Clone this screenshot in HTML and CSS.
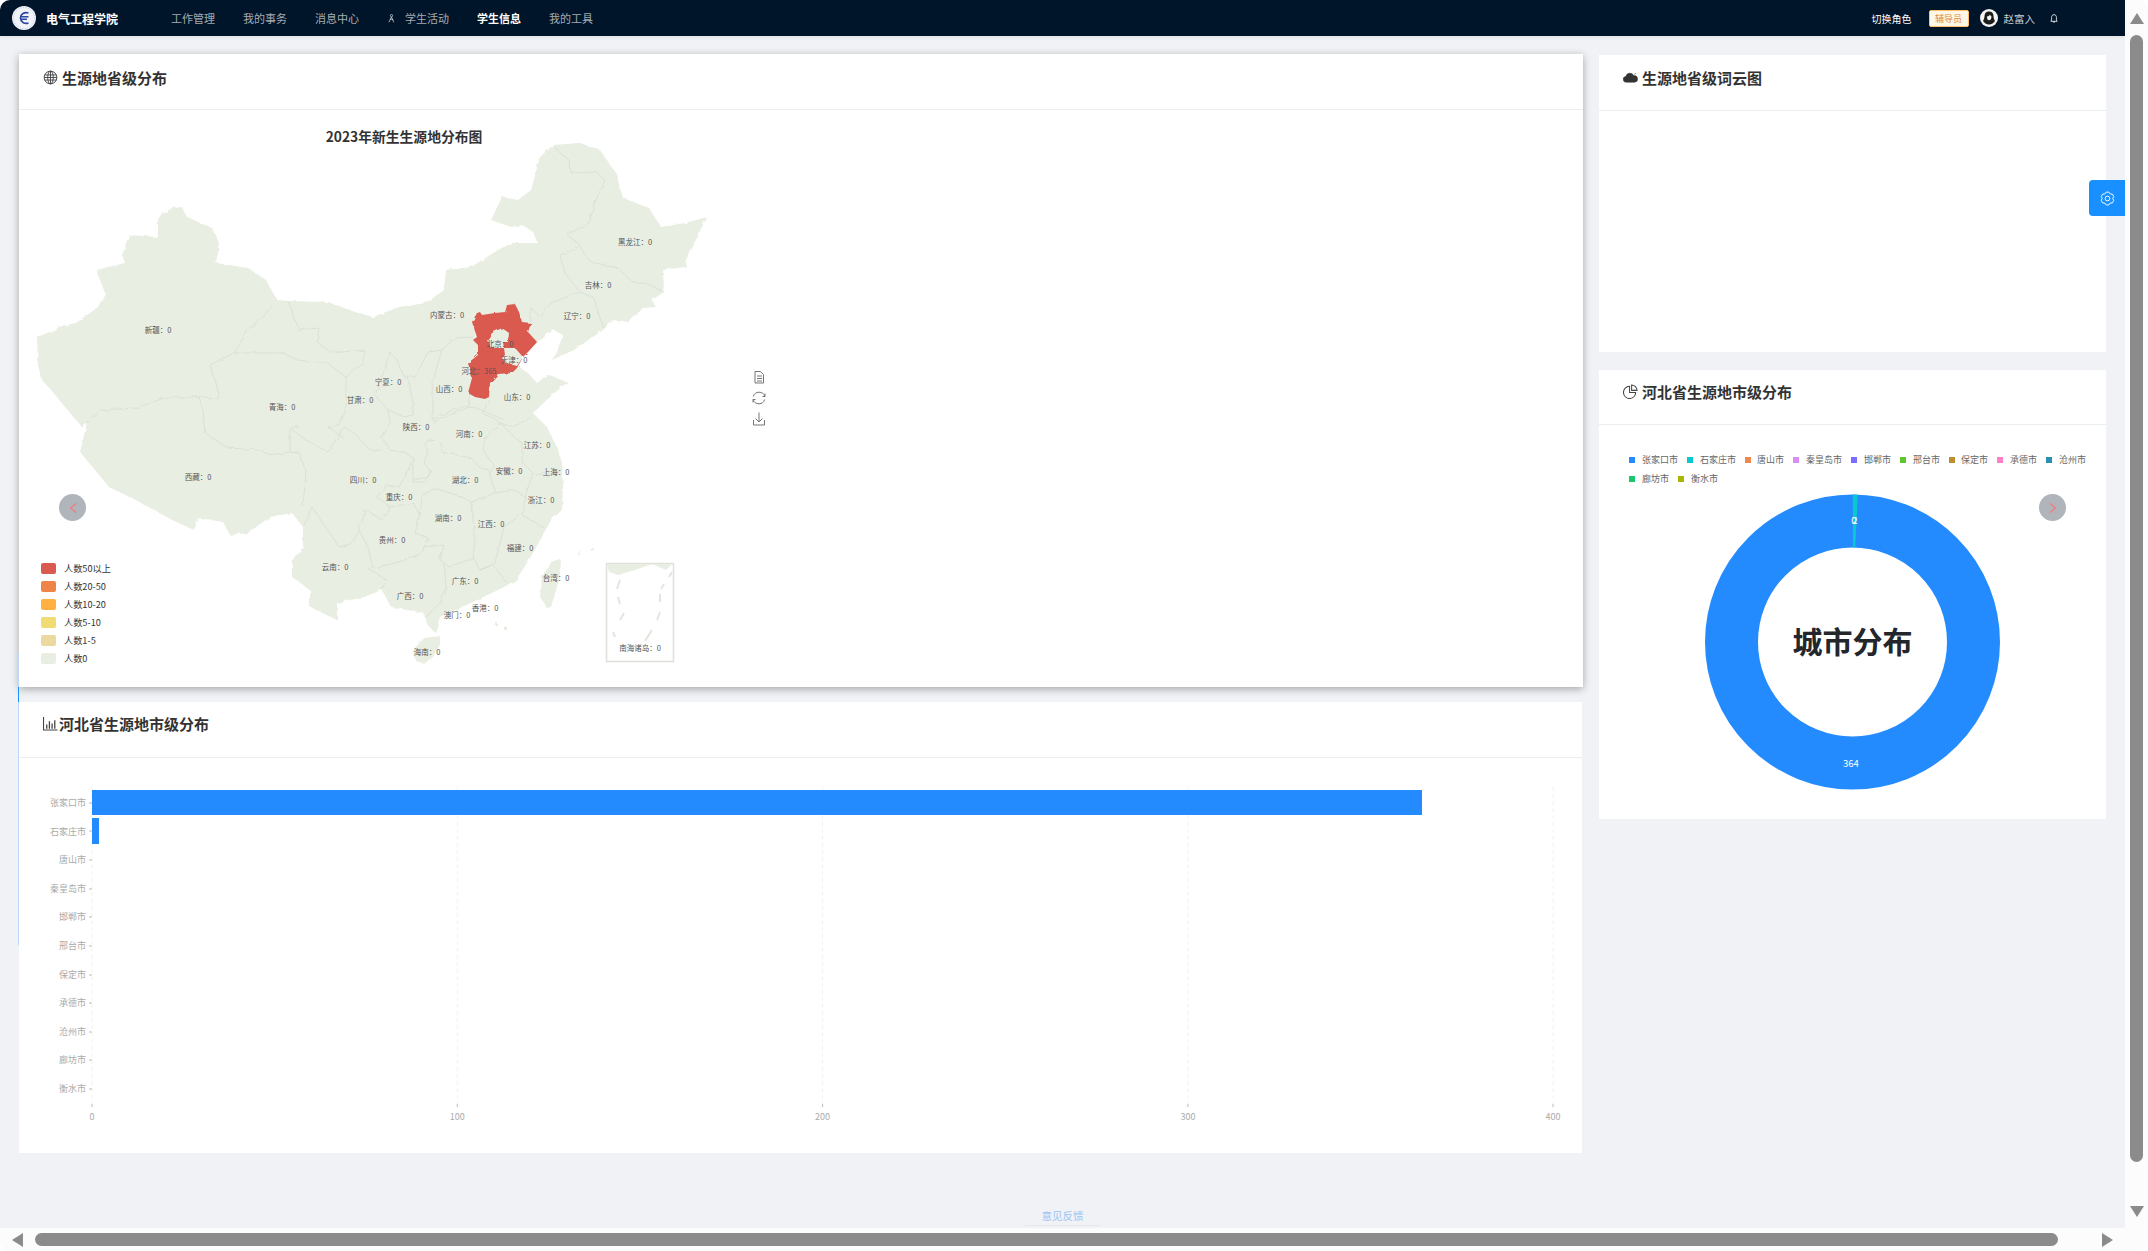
FILE: index.html
```html
<!DOCTYPE html>
<html lang="zh-CN">
<head>
  <meta charset="UTF-8" />
  <meta name="viewport" content="width=device-width, initial-scale=1" />
  <title>生源地分布 - 电气工程学院</title>
  <link rel="stylesheet" href="styles.css">
</head>
<body>
<div class="window">
  <div class="page">
    <header class="nav">
      <div class="brand">
        <svg class="logo" viewBox="0 0 24 24">
          <circle cx="12" cy="12" r="12" fill="#f1f3f8"/>
          <circle cx="12" cy="12" r="10.5" fill="none" stroke="#c3cce0" stroke-dasharray="1.2 1.2"/>
          <path d="M16.5 7C12.5 5.5 8.5 8.3 8.5 12s4 6.5 8 5" fill="none" stroke="#2b4a9e" stroke-width="1.7"/>
          <path d="M9 10.7h7.5M9 13.3h6" stroke="#2b4a9e" stroke-width="1.4"/>
        </svg>
        <span class="brand-name">电气工程学院</span>
      </div>
      <nav class="menu">
        <a>工作管理</a>
        <a>我的事务</a>
        <a>消息中心</a>
        <a class="with-icon">
          <svg viewBox="0 0 12 12" class="menu-icon"><circle cx="6" cy="2.2" r="1.5" fill="none" stroke="currentColor"/><path d="M6 4L2.5 11M6 4l3 7M3.8 6.5l4.5 1" fill="none" stroke="currentColor"/></svg>
          学生活动</a>
        <a class="active">学生信息</a>
        <a>我的工具</a>
      </nav>
      <div class="nav-right">
        <span class="switch-role">切换角色</span>
        <span class="role-tag">辅导员</span>
        <svg class="avatar" viewBox="0 0 18 18">
          <circle cx="9" cy="9" r="9" fill="#f4f4f4"/>
          <path d="M9 2.5c-3 0-4.5 2-4.5 4.5 0 2.5-1 4-1.5 5 1 1.8 3.5 3.5 6 3.5s5-1.7 6-3.5c-.5-1-1.5-2.5-1.5-5C13.500 4.500 12 2.500 9 2.500z" fill="#1c1c1c"/>
          <path d="M7 7.500c1.200 0 2.500-1 3-2 .3 1 1 1.800 1.500 2 0 2-1 3.800-2.500 3.800S7 9.500 7 7.500z" fill="#f4f4f4"/>
        </svg>
        <span class="user-name">赵富入</span>
        <svg class="bell" viewBox="0 0 10 12"><path d="M5 1.200c-2 0-3 1.500-3 3.300V8L1 9.500h8L8 8V4.500C8 2.700 7 1.200 5 1.200zM3.800 10.500h2.400" fill="none" stroke="#fff"/></svg>
      </div>
    </header>

    <main class="content">
      <div class="col-left">
        <section class="card map-card">
          <h2 class="card-title">
            <svg class="title-icon" viewBox="0 0 16 16"><g fill="none" stroke="#444"><circle cx="8" cy="8" r="6.8"/><ellipse cx="8" cy="8" rx="3" ry="6.8"/><path d="M8 1.2v13.6M1.8 5.3h12.4M1.8 10.7h12.4M1.2 8h13.6"/></g></svg>
            生源地省级分布
          </h2>
          <div class="card-body">
            <!-- viewBox uses page coordinates so the map can be traced directly -->
            <svg class="chart" viewBox="19 110 1564 577">
              <defs>
                <filter id="rough" x="0" y="0" width="100%" height="100%">
                  <feTurbulence type="fractalNoise" baseFrequency="0.14" numOctaves="2" seed="4"/>
                  <feDisplacementMap in="SourceGraphic" scale="3.5"/>
                </filter>
              </defs>
              <text class="map-title" x="404" y="142">2023年新生生源地分布图</text>

              <g filter="url(#rough)">
                <path class="land" d="M37 337L47 333 62 326 76 323 98 307 105 293 96 270 125 263 122 255 129 235 158 237 158 217 172 208 182 207 187 217 212 228 219 243 216 263 248 268 266 280 277 300 288 301 328 302 355 312 373 317 399 307 426 303 444 290 446 270 471 267 498 250 511 243 538 243 533 232 522 225 511 227 491 220 502 197 518 200 531 190 540 157 553 145 580 143 600 150 616 173 623 198 649 208 661 227 685 223 707 217 699 233 690 253 685 267 663 270 664 292 652 300 656 307 643 308 629 322 614 320 603 330 574 350 552 360 557 352 563 335 553 330 538 342 523 357 517 365 528 373 537 383 547 375 568 382 552 395 533 413 547 427 560 453 562 470 563 487 562 510 551 520 542 537 529 560 516 580 504 587 471 603 440 617 435 633 426 623 424 613 391 607 382 590 364 597 337 603 337 620 310 607 310 590 292 577 292 563 303 547 303 527 292 513 270 517 248 533 230 535 223 522 199 518 194 530 172 520 136 500 109 487 80 452 87 423 82 427 65 407 51 390 42 380 38 365Z"/>
                <path class="land" d="M551 563L561 560 560 577 551 607 547 608 540 597 542 577Z"/>
                <path class="land" d="M424 638L440 636 440 645 433 657 424 664 415 660 413 650Z"/>
                <path class="land" d="M578 553l3-1 0 2-3 1zM591 549l3-1 0 2-3 1zM495 622l2 0 0 3-2 0zM504 627l3 0 0 3-3 0z"/>

                <g class="borders">
                  <path d="M277 300L274 303 263 317 250 327 234 353 210 365 216 383 219 398 203 397 167 397 136 408 100 410 82 427"/>
                  <path d="M288 301L299 330 319 328 317 342 332 353 364 350 364 363 346 377 346 410 339 425 328 427 344 438"/>
                  <path d="M234 353L283 353 297 360 328 363 346 377"/>
                  <path d="M382 377L390 352 397 360 404 377 415 377 428 352 442 350 455 338 473 337"/>
                  <path d="M382 377L375 395 388 410 404 417 413 415 413 402 407 375"/>
                  <path d="M442 350L433 380 433 407 433 420 448 412 468 405 470 393"/>
                  <path d="M553 145L560 153 569 160 571 173 596 172 605 180 596 200 589 223 567 235 578 243 583 252 591 262 618 268 634 283 645 283 664 292"/>
                  <path d="M578 248L560 255 565 273 580 292 594 298 603 328"/>
                  <path d="M580 292L551 303 540 317 531 308 531 323"/>
                  <path d="M490 400L482 413 497 420 500 425 517 425 532 417"/>
                  <path d="M435 440L424 442 428 450 424 463 431 472 424 482 413 482 413 458 406 453 390 450 382 438 390 423 388 410"/>
                  <path d="M433 422L469 407 482 410 504 420"/>
                  <path d="M500 423L485 437 483 450 495 467 490 473"/>
                  <path d="M440 442L442 452 471 458 480 468 489 470 495 493"/>
                  <path d="M500 422L512 435 522 443 522 462 535 475 560 472"/>
                  <path d="M495 493L515 490 525 497 533 473"/>
                  <path d="M525 497L522 515 544 528"/>
                  <path d="M520 515L504 527 495 563 480 570"/>
                  <path d="M495 493L471 502 462 497 435 488 422 497 420 515 415 533 428 538 424 547"/>
                  <path d="M471 502L475 537 473 558 449 567 440 560 444 545 424 547"/>
                  <path d="M473 558L480 570 493 565 507 583"/>
                  <path d="M377 497L390 507 413 503 420 515"/>
                  <path d="M377 497L386 485 399 487 408 470 413 458"/>
                  <path d="M413 480L428 477 431 470"/>
                  <path d="M390 507L382 520 366 510 359 530 368 547 373 568 399 562 422 553 424 547"/>
                  <path d="M303 527L312 507 339 547 353 543 359 530"/>
                  <path d="M303 507L306 470 299 453 290 452 290 428 299 427"/>
                  <path d="M290 452L268 455 261 450 228 448 205 433 203 410 199 397"/>
                  <path d="M290 428L306 440 328 452 344 427 353 432 370 450 382 450"/>
                  <path d="M368 568L386 580 382 590"/>
                  <path d="M444 563L446 587 440 603 426 617"/>
                </g>

                <path class="hebei" d="M480 312L482 315 495 313 505 312 507 305 515 304 519 312 522 322 531 323 528 332 537 342 528 352 523 357 517 368 512 373 498 374 490 383 489 397 485 399 475 397 468 393 472 378 468 363 478 355 478 345 473 340 477 337 472 322 477 313Z"/>
                <path class="land" d="M502 328L509 333 508 342 503 342 504 348 491 348 487 340 492 333Z"/>
                <path class="land" d="M504 348L515 348 523 357 517 366 505 363 502 358 505 355Z"/>
              </g>

              <g class="province-labels">
                <text x="635" y="245">黑龙江：0</text>
                <text x="598" y="288">吉林：0</text>
                <text x="577" y="319">辽宁：0</text>
                <text x="447" y="318">内蒙古：0</text>
                <text x="158" y="333">新疆：0</text>
                <text x="500" y="347">北京：0</text>
                <text x="514" y="363">天津：0</text>
                <text x="479" y="374">河北：365</text>
                <text x="449" y="392">山西：0</text>
                <text x="517" y="400">山东：0</text>
                <text x="388" y="385">宁夏：0</text>
                <text x="282" y="410">青海：0</text>
                <text x="360" y="403">甘肃：0</text>
                <text x="416" y="430">陕西：0</text>
                <text x="469" y="437">河南：0</text>
                <text x="537" y="448">江苏：0</text>
                <text x="509" y="474">安徽：0</text>
                <text x="556" y="475">上海：0</text>
                <text x="198" y="480">西藏：0</text>
                <text x="363" y="483">四川：0</text>
                <text x="465" y="483">湖北：0</text>
                <text x="399" y="500">重庆：0</text>
                <text x="541" y="503">浙江：0</text>
                <text x="448" y="521">湖南：0</text>
                <text x="491" y="527">江西：0</text>
                <text x="392" y="543">贵州：0</text>
                <text x="520" y="551">福建：0</text>
                <text x="335" y="570">云南：0</text>
                <text x="556" y="581">台湾：0</text>
                <text x="465" y="584">广东：0</text>
                <text x="410" y="599">广西：0</text>
                <text x="485" y="611">香港：0</text>
                <text x="457" y="618">澳门：0</text>
                <text x="427" y="655">海南：0</text>
              </g>

              <!-- south china sea inset -->
              <rect class="inset" x="606.5" y="563.5" width="67" height="98"/>
              <path class="land" d="M607 564L609 572 618 575 635 570 652 564 666 570 672 564Z"/>
              <path class="dash-line" d="M620 580l-3 9M618 597l2 7M624 613l-4 7M613 632l2 5M652 630l-7 11M660 612l-3 8M660 594l0 8M664 584l-3 5M672 572l-3 5"/>
              <text class="province-label-solo" x="640" y="651">南海诸岛：0</text>

              <g class="legend">
                <rect x="41" y="563" width="15" height="11" rx="2" fill="#db5a4f"/>
                <rect x="41" y="581" width="15" height="11" rx="2" fill="#ee8445"/>
                <rect x="41" y="599" width="15" height="11" rx="2" fill="#ffb041"/>
                <rect x="41" y="617" width="15" height="11" rx="2" fill="#f1dc74"/>
                <rect x="41" y="635" width="15" height="11" rx="2" fill="#ebd9a0"/>
                <rect x="41" y="653" width="15" height="11" rx="2" fill="#e9eee3"/>
                <text x="64" y="572">人数50以上</text>
                <text x="64" y="590">人数20-50</text>
                <text x="64" y="608">人数10-20</text>
                <text x="64" y="626">人数5-10</text>
                <text x="64" y="644">人数1-5</text>
                <text x="64" y="662">人数0</text>
              </g>

              <g class="toolbox">
                <path d="M755 371.5h5.5l3 3v8.500h-8.500zM757 376h5M757 378.5h5M757 381h5"/>
                <path d="M764.8 396.5A6 6 0 0 0 753.3 396.5M753.2 399.5A6 6 0 0 0 764.7 399.5M765 393.5v3h-2.5M753 402.5v-3h2.5"/>
                <path d="M759 412.5v9M755.5 418.5l3.5 3.5 3.5-3.5M753.5 420v5h11v-5"/>
              </g>
            </svg>
          </div>
        </section>

        <section class="card bar-card">
          <h2 class="card-title title-tight">
            <svg class="title-icon" viewBox="0 0 14 14"><path d="M.5 1v12h13" fill="none" stroke="#444"/><path d="M3.500 12V8M6 12V5M8.500 12V7M11 12V4" stroke="#444" stroke-width="1.2"/></svg>河北省生源地市级分布
          </h2>
          <div class="card-body">
            <svg class="chart" viewBox="19 758 1563 395">
              <g class="grid-lines">
                <path d="M92 787V1104M457.3 787V1104M822.6 787V1104M1187.9 787V1104M1553 787V1104"/>
              </g>
              <path class="axis-ticks" d="M92 1104v3M457.3 1104v3M822.6 1104v3M1187.9 1104v3M1553 1104v3M89 803h3M89 831h3M89 860h3M89 889h3M89 917h3M89 946h3M89 975h3M89 1003h3M89 1032h3M89 1060h3M89 1089h3"/>
              <rect x="92" y="790" width="1330" height="25" fill="#248bff"/>
              <rect x="92" y="818" width="7" height="26" fill="#248bff"/>
              <g class="cat-labels">
                <text x="86" y="806">张家口市</text>
                <text x="86" y="835">石家庄市</text>
                <text x="86" y="863">唐山市</text>
                <text x="86" y="892">秦皇岛市</text>
                <text x="86" y="920">邯郸市</text>
                <text x="86" y="949">邢台市</text>
                <text x="86" y="978">保定市</text>
                <text x="86" y="1006">承德市</text>
                <text x="86" y="1035">沧州市</text>
                <text x="86" y="1063">廊坊市</text>
                <text x="86" y="1092">衡水市</text>
              </g>
              <g class="val-labels">
                <text x="92" y="1120">0</text>
                <text x="457.3" y="1120">100</text>
                <text x="822.6" y="1120">200</text>
                <text x="1187.9" y="1120">300</text>
                <text x="1553" y="1120">400</text>
              </g>
            </svg>
          </div>
        </section>
      </div>

      <div class="col-right">
        <section class="card cloud-card">
          <h2 class="card-title">
            <svg class="title-icon" viewBox="0 0 16 12"><path d="M3.500 11A3 3 0 0 1 3 5a4.500 4.500 0 0 1 8.500-1A3.500 3.500 0 0 1 12.500 11zM12 2.500l2-1" fill="#333" stroke="#333" stroke-width=".6"/></svg>
            生源地省级词云图
          </h2>
        </section>

        <section class="card pie-card">
          <h2 class="card-title">
            <svg class="title-icon" viewBox="0 0 16 16"><path d="M7 2.500a6.500 6.500 0 1 0 6.500 6.500H7z" fill="none" stroke="#444" stroke-width="1.1"/><path d="M9.200 1v5.800H15A5.800 5.800 0 0 0 9.200 1z" fill="none" stroke="#444" stroke-width="1.1"/></svg>
            河北省生源地市级分布
          </h2>
          <div class="card-body">
            <svg class="chart" viewBox="1599 425 507 394">
              <g class="pie-legend">
                <rect x="1629" y="457" width="6" height="6" fill="#248bff"/><text x="1642" y="463">张家口市</text>
                <rect x="1687" y="457" width="6" height="6" fill="#0ac8ce"/><text x="1700" y="463">石家庄市</text>
                <rect x="1745" y="457" width="6" height="6" fill="#f0874e"/><text x="1757" y="463">唐山市</text>
                <rect x="1793" y="457" width="6" height="6" fill="#da8cf5"/><text x="1806" y="463">秦皇岛市</text>
                <rect x="1851" y="457" width="6" height="6" fill="#7a6cff"/><text x="1864" y="463">邯郸市</text>
                <rect x="1900" y="457" width="6" height="6" fill="#5ec62e"/><text x="1913" y="463">邢台市</text>
                <rect x="1949" y="457" width="6" height="6" fill="#bf8e2c"/><text x="1961" y="463">保定市</text>
                <rect x="1997" y="457" width="6" height="6" fill="#ff80c8"/><text x="2010" y="463">承德市</text>
                <rect x="2046" y="457" width="6" height="6" fill="#2b8fb3"/><text x="2059" y="463">沧州市</text>
                <rect x="1629" y="476" width="6" height="6" fill="#1ac86e"/><text x="1642" y="482">廊坊市</text>
                <rect x="1678" y="476" width="6" height="6" fill="#a8b800"/><text x="1691" y="482">衡水市</text>
              </g>
              <circle cx="1852.5" cy="642" r="121" fill="none" stroke="#248bff" stroke-width="53"/>
              <path d="M1852.8 494.5L1857.8 494.6 1855.3 547.5 1853 547.5Z" fill="#0ac8ce"/>
              <text class="pie-value" x="1854" y="524">0</text>
              <text class="pie-value" x="1855" y="524">2</text>
              <text class="pie-value" x="1851" y="767">364</text>
              <text class="pie-center" x="1852.5" y="653">城市分布</text>
            </svg>
          </div>
        </section>
      </div>
    </main>

    <footer class="feedback"><a>意见反馈</a></footer>
  </div>

  <div class="vscroll">
    <span class="arrow arrow-up"></span>
    <span class="thumb-v"></span>
    <span class="arrow arrow-down"></span>
  </div>
  <div class="hscroll">
    <span class="arrow arrow-left"></span>
    <span class="thumb-h"></span>
    <span class="arrow arrow-right"></span>
  </div>
  <div class="corner"></div>

  <span class="edge-line"></span>
  <button class="settings-btn">
    <svg viewBox="0 0 16 16"><path d="M6.54 1.15H9.46L10.8 3.15 13.2 3.32 14.66 5.84 13.6 8 14.66 10.16 13.2 12.68 10.8 12.85 9.46 14.85H6.54L5.2 12.85 2.8 12.68 1.34 10.16 2.4 8 1.34 5.84 2.8 3.32 5.2 3.15Z" fill="none" stroke="#fff" stroke-width="1" stroke-linejoin="round"/><circle cx="8" cy="8" r="2.5" fill="none" stroke="#fff" stroke-width="1"/></svg>
  </button>
  <span class="carousel-btn carousel-prev"><svg viewBox="0 0 8 10"><path d="M7 .5L1.500 5 7 9.500" fill="none" stroke="#f4797e" stroke-width="1.2"/></svg></span>
  <span class="carousel-btn carousel-next"><svg viewBox="0 0 8 10"><path d="M1 .5L6.500 5 1 9.500" fill="none" stroke="#f4797e" stroke-width="1.2"/></svg></span>
</div>
</body>
</html>
```

FILE: styles.css
```css
* {
  box-sizing: border-box;
}
html, body {
  margin: 0;
  padding: 0;
  background: #fff;
}
body {
  font-family: "Noto Sans CJK SC", "Noto Sans", sans-serif;
  color: #333;
  overflow: hidden;
}
.window {
  position: relative;
  width: 2148px;
  height: 1251px;
  display: grid;
  grid-template-columns: 2125px 23px;
  grid-template-rows: 1228px 23px;
  background: #fcfcfc;
  border-radius: 10px;
  overflow: hidden;
}
.page {
  background: #f0f2f5;
  display: flex;
  flex-direction: column;
  overflow: hidden;
}

/* top bar */
.nav {
  height: 36px;
  flex: none;
  background: #001529;
  display: flex;
  align-items: center;
  padding-left: 12px;
  box-shadow: 0 1px 4px rgba(0, 21, 41, 0.08);
  color: rgba(255, 255, 255, 0.65);
  font-size: 11px;
}
.brand {
  display: flex;
  align-items: center;
  width: 145px;
}
.logo {
  width: 24px;
  height: 24px;
  margin-right: 10px;
}
.brand-name {
  font-size: 12px;
  font-weight: 700;
  color: #fff;
}
.menu {
  display: flex;
  gap: 28px;
  flex: 1;
  padding-left: 14px;
}
.menu a {
  white-space: nowrap;
}
.menu .active {
  color: #fff;
  font-weight: 700;
}
.menu .with-icon {
  display: flex;
  align-items: center;
  gap: 9px;
}
.menu-icon {
  width: 9px;
  height: 11px;
  color: #d6dae0;
}
.nav-right {
  display: flex;
  align-items: center;
  padding-right: 67px;
}
.switch-role {
  color: #fff;
  font-size: 10px;
  margin-right: 17px;
}
.role-tag {
  width: 40px;
  height: 17px;
  line-height: 15px;
  text-align: center;
  font-size: 9px;
  color: #e08a3c;
  background: #fff7e6;
  border: 1px solid #ffc069;
  border-radius: 2px;
  margin-right: 11px;
}
.avatar {
  width: 18px;
  height: 18px;
  margin-right: 6px;
}
.user-name {
  font-size: 10.5px;
  color: #ccd0d5;
  margin-right: 15px;
}
.bell {
  width: 8px;
  height: 11px;
}

/* cards */
.content {
  flex: 1;
  min-height: 0;
  display: grid;
  grid-template-columns: 1564px 507px;
  column-gap: 16px;
  padding: 18px 0 0 19px;
  align-items: start;
}
.col-left {
  display: flex;
  flex-direction: column;
  gap: 15px;
}
.col-right {
  display: flex;
  flex-direction: column;
  gap: 18px;
  padding-top: 1px;
}
.card {
  background: #fff;
}
.card-title {
  height: 56px;
  margin: 0;
  padding: 0 0 11px 24px;
  display: flex;
  align-items: center;
  gap: 4px;
  font-size: 15px;
  font-weight: 700;
  color: #333;
  border-bottom: 1px solid #ebeef0;
}
.title-tight {
  gap: 1px;
}
.title-icon {
  width: 15px;
  height: 15px;
}
.card-body {
  line-height: 0;
}
.map-card {
  height: 633px;
  box-shadow: 0 2px 8px rgba(0, 0, 0, 0.32);
}
.map-card .card-title {
  padding-bottom: 9px;
}
.bar-card {
  height: 451px;
  width: 1563px;
}
.bar-card .card-title {
  padding-bottom: 12px;
}
.cloud-card {
  height: 297px;
}
.pie-card {
  height: 449px;
}
.pie-card .card-title {
  height: 55px;
  padding-bottom: 12px;
}
.chart {
  display: block;
  width: 100%;
}
.map-card .chart { height: 577px; }
.bar-card .chart { height: 395px; }
.pie-card .chart { height: 394px; }

/* map */
.land {
  fill: #e9eee3;
}
.hebei {
  fill: #db5a4f;
}
.borders path {
  fill: none;
  stroke: #d6dad1;
  stroke-width: 0.7;
}
.map-title {
  font-size: 13.8px;
  font-weight: 700;
  fill: #333;
  text-anchor: middle;
}
.province-labels text,
.province-label-solo {
  font-size: 7.5px;
  fill: #555;
  text-anchor: middle;
}
.inset {
  fill: #fff;
  stroke: #dfe1da;
  stroke-width: 1.5;
}
.dash-line {
  fill: none;
  stroke: #e2e6dc;
  stroke-width: 2;
}
.legend text {
  font-size: 9.2px;
  fill: #333;
}
.toolbox path {
  fill: none;
  stroke: #666;
  stroke-width: 0.9;
}

/* bar chart */
.grid-lines path {
  fill: none;
  stroke: #f2f2f2;
  stroke-dasharray: 4 3;
}
.axis-ticks {
  fill: none;
  stroke: #bbb;
}
.cat-labels text {
  font-size: 9px;
  fill: #aaa;
  text-anchor: end;
}
.val-labels text {
  font-size: 9px;
  fill: #aaa;
  text-anchor: middle;
}

/* donut */
.pie-legend text {
  font-size: 9px;
  fill: #666;
}
.pie-value {
  font-size: 9.5px;
  fill: #fff;
  text-anchor: middle;
}
.pie-center {
  font-size: 30px;
  font-weight: 700;
  fill: #23262b;
  text-anchor: middle;
}

/* footer link */
.feedback {
  position: absolute;
  left: 1025px;
  top: 1208px;
  width: 75px;
  height: 18px;
  line-height: 16px;
  text-align: center;
  font-size: 10.5px;
  color: #9cc3f6;
  border-bottom: 1px solid #e5e7ea;
}

/* window scrollbars */
.vscroll {
  grid-column: 2;
  grid-row: 1;
  display: flex;
  flex-direction: column;
  align-items: center;
  padding-top: 13px;
}
.thumb-v {
  width: 13px;
  height: 1127px;
  margin-top: 11px;
  background: #8b8b8b;
  border-radius: 7px;
}
.hscroll {
  grid-column: 1;
  grid-row: 2;
  display: flex;
  align-items: center;
  padding-left: 12px;
}
.thumb-h {
  width: 2023px;
  height: 13px;
  margin-left: 12px;
  background: #8b8b8b;
  border-radius: 7px;
}
.arrow {
  display: block;
  width: 0;
  height: 0;
}
.arrow-up {
  border-left: 7px solid transparent;
  border-right: 7px solid transparent;
  border-bottom: 11px solid #8b8b8b;
}
.arrow-down {
  margin-top: 44px;
  border-left: 7px solid transparent;
  border-right: 7px solid transparent;
  border-top: 11px solid #8b8b8b;
}
.arrow-left {
  border-top: 7px solid transparent;
  border-bottom: 7px solid transparent;
  border-right: 11px solid #8b8b8b;
}
.arrow-right {
  margin-left: 44px;
  border-top: 7px solid transparent;
  border-bottom: 7px solid transparent;
  border-left: 11px solid #8b8b8b;
}

/* floating controls */
.edge-line {
  position: absolute;
  left: 18px;
  top: 653px;
  width: 1px;
  height: 292px;
  background: #bcd9fb;
}
.edge-line::after {
  content: "";
  position: absolute;
  left: 0;
  top: 34px;
  width: 1px;
  height: 15px;
  background: #1890ff;
}
.settings-btn {
  position: absolute;
  left: 2089px;
  top: 180px;
  width: 36px;
  height: 36px;
  padding: 0;
  border: none;
  border-radius: 4px 0 0 4px;
  background: #1890ff;
  display: flex;
  align-items: center;
  justify-content: center;
}
.settings-btn svg {
  width: 15px;
  height: 15px;
}
.carousel-btn {
  position: absolute;
  top: 494px;
  width: 27px;
  height: 27px;
  border-radius: 50%;
  background: #b0b4bb;
  display: flex;
  align-items: center;
  justify-content: center;
}
.carousel-btn svg {
  width: 8px;
  height: 10px;
}
.carousel-prev {
  left: 59px;
}
.carousel-next {
  left: 2039px;
}
```
